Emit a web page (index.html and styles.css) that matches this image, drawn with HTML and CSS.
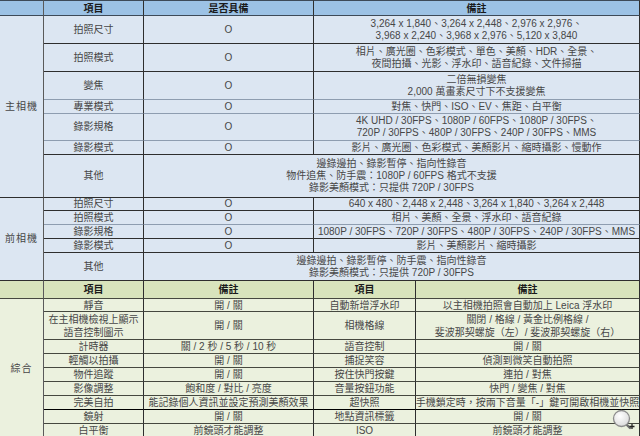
FILE: index.html
```html
<!DOCTYPE html>
<html lang="zh-Hant">
<head>
<meta charset="utf-8">
<title>規格表</title>
<link rel="stylesheet" href="styles.css">
</head>
<body>
<div class="sheet">
  <div class="spec spec-top">
    <div class="c hd"></div>
    <div class="c hd">項目</div>
    <div class="c hd">是否具備</div>
    <div class="c hd">備註</div>

    <div class="c grp main">主相機</div>
    <div class="c">拍照尺寸</div>
    <div class="c">O</div>
    <div class="c">3,264 x 1,840、3,264 x 2,448、2,976 x 2,976、<br>3,968 x 2,240、3,968 x 2,976、5,120 x 3,840</div>

    <div class="c">拍照模式</div>
    <div class="c">O</div>
    <div class="c">相片、廣光圈、色彩模式、單色、美顏、HDR、全景、<br>夜間拍攝、光影、浮水印、語音紀錄、文件掃描</div>

    <div class="c lt">變焦</div>
    <div class="c lt">O</div>
    <div class="c lt">二倍無損變焦<br>2,000 萬畫素尺寸下不支援變焦</div>

    <div class="c lt">專業模式</div>
    <div class="c lt">O</div>
    <div class="c lt">對焦、快門、ISO、EV、焦距、白平衡</div>

    <div class="c lt">錄影規格</div>
    <div class="c lt">O</div>
    <div class="c lt">4K UHD / 30FPS、1080P / 60FPS、1080P / 30FPS、<br>720P / 30FPS、480P / 30FPS、240P / 30FPS、MMS</div>

    <div class="c">錄影模式</div>
    <div class="c">O</div>
    <div class="c">影片、廣光圈、色彩模式、美顏影片、縮時攝影、慢動作</div>

    <div class="c">其他</div>
    <div class="c wide">邊錄邊拍、錄影暫停、指向性錄音<br>物件追焦、防手震：1080P / 60FPS 格式不支援<br>錄影美顏模式：只提供 720P / 30FPS</div>

    <div class="c grp front">前相機</div>
    <div class="c">拍照尺寸</div>
    <div class="c">O</div>
    <div class="c">640 x 480、2,448 x 2,448、3,264 x 1,840、3,264 x 2,448</div>

    <div class="c lt">拍照模式</div>
    <div class="c lt">O</div>
    <div class="c lt">相片、美顏、全景、浮水印、語音紀錄</div>

    <div class="c">錄影規格</div>
    <div class="c">O</div>
    <div class="c">1080P / 30FPS、720P / 30FPS、480P / 30FPS、240P / 30FPS、MMS</div>

    <div class="c">錄影模式</div>
    <div class="c">O</div>
    <div class="c">影片、美顏影片、縮時攝影</div>

    <div class="c">其他</div>
    <div class="c wide">邊錄邊拍、錄影暫停、防手震、指向性錄音<br>錄影美顏模式：只提供 720P / 30FPS</div>
  </div>

  <div class="spec spec-bottom">
    <div class="c hd"></div>
    <div class="c hd">項目</div>
    <div class="c hd">備註</div>
    <div class="c hd">項目</div>
    <div class="c hd">備註</div>

    <div class="c grp misc">綜合</div>
    <div class="c">靜音</div>
    <div class="c">開 / 關</div>
    <div class="c">自動新增浮水印</div>
    <div class="c">以主相機拍照會自動加上 Leica 浮水印</div>

    <div class="c">在主相機檢視上顯示<br>語音控制圖示</div>
    <div class="c">開 / 關</div>
    <div class="c">相機格線</div>
    <div class="c">關閉 / 格線 / 黃金比例格線 /<br>斐波那契螺旋（左）/ 斐波那契螺旋（右）</div>

    <div class="c">計時器</div>
    <div class="c">關 / 2 秒 / 5 秒 / 10 秒</div>
    <div class="c">語音控制</div>
    <div class="c">開 / 關</div>

    <div class="c">輕觸以拍攝</div>
    <div class="c">開 / 關</div>
    <div class="c">捕捉笑容</div>
    <div class="c">偵測到微笑自動拍照</div>

    <div class="c">物件追蹤</div>
    <div class="c">開 / 關</div>
    <div class="c">按住快門按鍵</div>
    <div class="c">連拍 / 對焦</div>

    <div class="c">影像調整</div>
    <div class="c">飽和度 / 對比 / 亮度</div>
    <div class="c">音量按鈕功能</div>
    <div class="c">快門 / 變焦 / 對焦</div>

    <div class="c dk">完美自拍</div>
    <div class="c dk">能記錄個人資訊並設定預測美顏效果</div>
    <div class="c dk">超快照</div>
    <div class="c dk">手機鎖定時，按兩下音量「-」鍵可開啟相機並快照</div>

    <div class="c">鏡射</div>
    <div class="c">開 / 關</div>
    <div class="c">地點資訊標籤</div>
    <div class="c">開 / 關</div>

    <div class="c">白平衡</div>
    <div class="c">前鏡頭才能調整</div>
    <div class="c">ISO</div>
    <div class="c">前鏡頭才能調整</div>
  </div>

  <svg class="zoom-icon" width="28" height="24" viewBox="0 0 28 24" aria-hidden="true">
    <defs>
      <radialGradient id="lens" cx="0.4" cy="0.35" r="0.7">
        <stop offset="0" stop-color="#ffffff"/>
        <stop offset="1" stop-color="#d9d9d9"/>
      </radialGradient>
    </defs>
    <line x1="17" y1="17" x2="21" y2="21" stroke="#6b6b6b" stroke-width="2.4" stroke-linecap="round"/>
    <circle cx="12.5" cy="11.5" r="8" fill="url(#lens)" stroke="#8c8c8c" stroke-width="1.3"/>
    <path d="M20.5 19.5h5M23 17v5" stroke="#222" stroke-width="1.3"/>
  </svg>
</div>
</body>
</html>
```
FILE: styles.css
```css
html, body {
  margin: 0;
  padding: 0;
  background: #ffffff;
}

.sheet {
  position: relative;
  width: 640px;
  height: 436px;
  overflow: hidden;
  font-family: "Liberation Sans", "Noto Sans CJK TC", sans-serif;
  font-size: 10px;
  color: #474747;
}

.spec {
  display: grid;
  width: 640px;
}

.spec-top {
  grid-template-columns: 44px 100px 170px 326px;
  grid-template-rows: 16px 28px 28px 28px 14px 27px 14px 43px 13px 14px 14px 14px 28px;
  background: #dce6f2;
  line-height: 12px;
}

.spec-bottom {
  grid-template-columns: 44px 100px 170px 102px 224px;
  grid-template-rows: 18px 13px 28px 14px 14px 14px 14px 14px 14px 14px;
  background: #ebf1de;
  line-height: 13px;
}

.c {
  box-sizing: border-box;
  display: flex;
  align-items: center;
  justify-content: center;
  text-align: center;
  white-space: nowrap;
  border-right: 1px solid #2e2e2e;
  border-bottom: 1px solid #2e2e2e;
}

.c.lt {
  border-bottom-color: #8e9db0;
}

.spec-top .c:first-child,
.spec-top .grp,
.spec-bottom .grp,
.spec-bottom .c:first-child {
  border-right-color: #5a5a5a;
}

.spec-top .hd {
  background: #9cc2e5;
  color: #1a1a1a;
  font-weight: bold;
  border-top: 1px solid #3d4a58;
  border-bottom-color: #3d4a58;
  padding-top: 1px;
}

.spec-bottom .hd {
  background: #d8e4bc;
  color: #1a1a1a;
  font-weight: bold;
}

.spec-bottom .c {
  border-bottom-color: #45483f;
}

.spec-bottom .c.dk {
  border-bottom-color: #000000;
}

.grp {
  letter-spacing: 1px;
}

.main { grid-row: span 7; }
.front { grid-row: span 5; }
.misc { grid-row: span 9; }

.wide {
  grid-column: span 2;
  line-height: 12px;
}

.zoom-icon {
  position: absolute;
  left: 609px;
  top: 407px;
}
```
